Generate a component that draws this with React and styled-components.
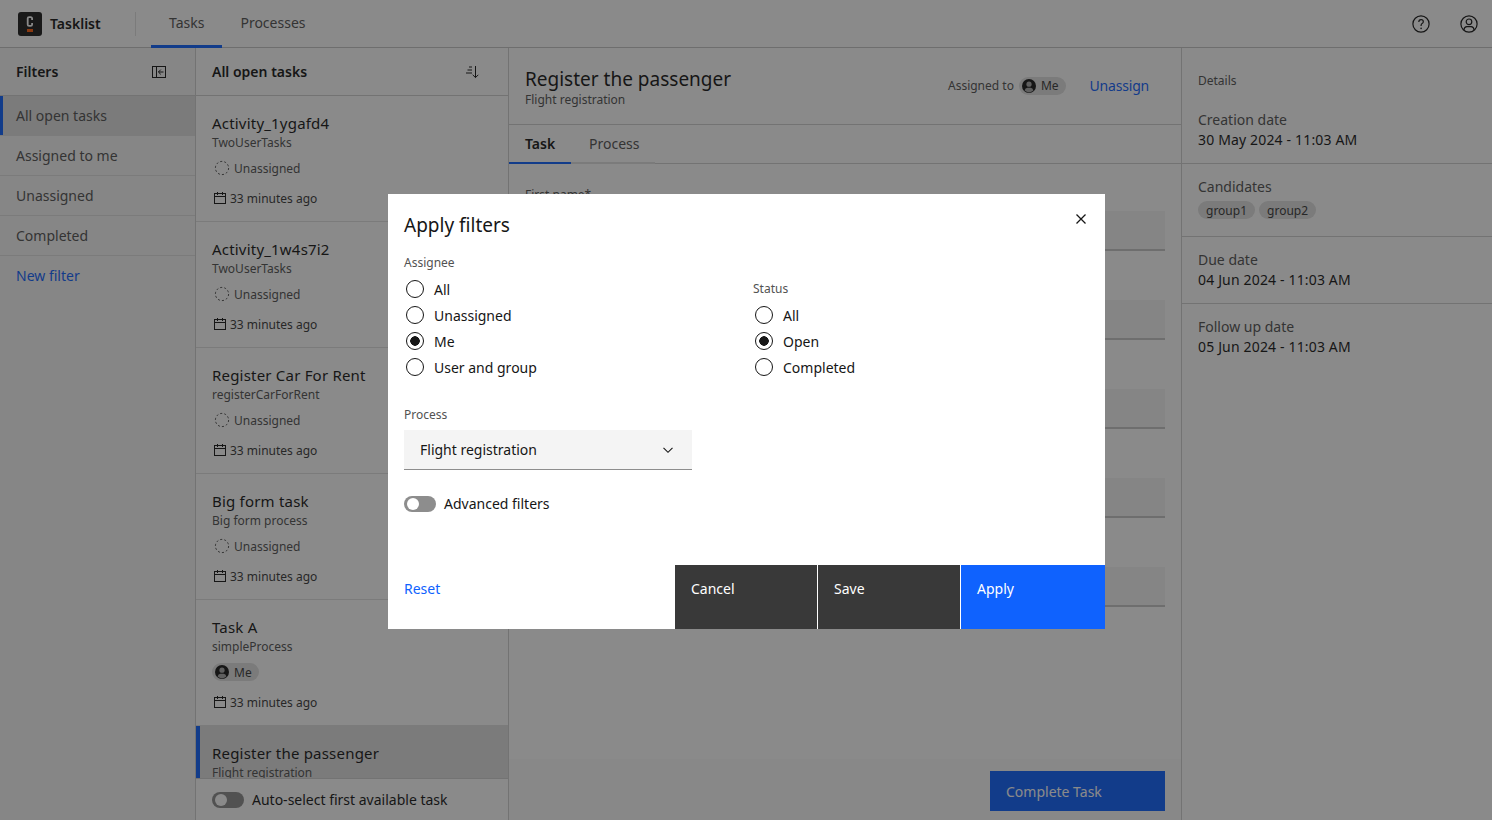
import styled, { createGlobalStyle } from "styled-components";

const GlobalStyle = createGlobalStyle`
	* {
		box-sizing: border-box;
	}
	html,
	body {
		margin: 0;
		height: 100%;
		background: #fff;
		color: #161616;
		font-family: "Noto Sans", "Liberation Sans", sans-serif;
		font-size: 14px;
	}
`;

const FILTERS = ["All open tasks", "Assigned to me", "Unassigned", "Completed"];

const TASKS = [
	{ name: "Activity_1ygafd4", process: "TwoUserTasks" },
	{ name: "Activity_1w4s7i2", process: "TwoUserTasks" },
	{ name: "Register Car For Rent", process: "registerCarForRent" },
	{ name: "Big form task", process: "Big form process" },
	{ name: "Task A", process: "simpleProcess", me: true },
	{ name: "Register the passenger", process: "Flight registration", active: true },
];

const DETAILS = [
	{ label: "Creation date", value: "30 May 2024 - 11:03 AM" },
	{ label: "Candidates", tags: ["group1", "group2"] },
	{ label: "Due date", value: "04 Jun 2024 - 11:03 AM" },
	{ label: "Follow up date", value: "05 Jun 2024 - 11:03 AM" },
];

// only the first label shows, the others sit behind the modal
const FIELDS = ["First name*", "", "", "", ""];

const ASSIGNEE = [
	{ label: "All" },
	{ label: "Unassigned" },
	{ label: "Me", checked: true },
	{ label: "User and group" },
];

const STATUS = [{ label: "All" }, { label: "Open", checked: true }, { label: "Completed" }];

const Logo = () => (
	<svg width="24" height="24" viewBox="0 0 24 24">
		<rect width="24" height="24" rx="3" fill="#1c1c1c" />
		<path d="M14.1 8V6.6q0-1.4-1.4-1.4h-1.6q-1.4 0-1.4 1.4v5.8q0 1.4 1.4 1.4h1.6q1.4 0 1.4-1.4V11" fill="none" stroke="#fff" strokeWidth="1.8" />
		<rect x="9" y="17" width="6" height="3" fill="#fc5d0d" />
	</svg>
);

const HelpIcon = () => (
	<svg width="20" height="20" viewBox="0 0 20 20" fill="none" stroke="#161616" strokeWidth="1.2">
		<circle cx="10" cy="10" r="8.1" />
		<path d="M7.8 8q0-2.3 2.3-2.3 2.2 0 2.2 2 0 1.2-1.2 1.8-1 .5-1 1.8v.6" />
		<circle cx="10.1" cy="14.4" r=".8" fill="#161616" stroke="none" />
	</svg>
);

const UserIcon = () => (
	<svg width="20" height="20" viewBox="0 0 20 20" fill="none" stroke="#161616" strokeWidth="1.2">
		<circle cx="10" cy="10" r="8.1" />
		<circle cx="10" cy="7.8" r="2.8" />
		<path d="M4.9 16q.4-3.4 3-3.4h4.2q2.6 0 3 3.4" />
	</svg>
);

const PanelIcon = () => (
	<svg width="16" height="16" viewBox="0 0 16 16" fill="none" stroke="#161616" strokeWidth="1">
		<rect x="1.5" y="2.5" width="13" height="11" />
		<path d="M5.5 2.5v11M12.5 8H7.5M9.8 5.6 7.4 8l2.4 2.4" />
	</svg>
);

const SortIcon = () => (
	<svg width="16" height="16" viewBox="0 0 16 16" fill="none" stroke="#161616" strokeWidth="1">
		<path d="M11.5 2v11.5M8.7 10.8l2.8 2.8 2.8-2.8M5 3h3M3.5 6H8M2 9h6" />
	</svg>
);

const DashedCircle = () => (
	<svg width="16" height="16" viewBox="0 0 16 16" fill="none" stroke="#525252" strokeWidth="1">
		<circle cx="8" cy="8" r="6.6" strokeDasharray="2.1 2.05" />
	</svg>
);

const CalendarIcon = () => (
	<svg width="14" height="14" viewBox="0 0 14 14" fill="none" stroke="#161616" strokeWidth="1">
		<rect x="1.5" y="2.5" width="11" height="10" />
		<path d="M1.5 5.5h11M4.5 1v3M9.5 1v3" />
	</svg>
);

const AvatarIcon = () => (
	<svg width="16" height="16" viewBox="0 0 16 16">
		<circle cx="8" cy="8" r="7" fill="#161616" />
		<circle cx="8" cy="6.2" r="2.6" fill="#a8a8a8" />
		<path d="M3.6 12.6q.6-2.9 2.8-2.9h3.2q2.2 0 2.8 2.9Q10.5 14.4 8 14.4t-4.4-1.8z" fill="#a8a8a8" />
	</svg>
);

const CloseIcon = () => (
	<svg width="20" height="20" viewBox="0 0 20 20" fill="none" stroke="#161616" strokeWidth="1.3">
		<path d="M5.5 5.5l9 9M14.5 5.5l-9 9" />
	</svg>
);

const ChevronIcon = () => (
	<svg width="16" height="16" viewBox="0 0 16 16" fill="none" stroke="#161616" strokeWidth="1.1">
		<path d="M3.5 5.8 8 10.3l4.5-4.5" />
	</svg>
);

const MeChip = () => (
	<Chip>
		<AvatarIcon />
		Me
	</Chip>
);

const RadioGroup = ({ title, items, $offset }) => (
	<RadioBlock $offset={$offset}>
		<GroupLabel>{title}</GroupLabel>
		{items.map((item) => (
			<RadioRow key={item.label}>
				<RadioDot $checked={item.checked} />
				{item.label}
			</RadioRow>
		))}
	</RadioBlock>
);

const App = () => {
	return (
		<Page>
			<GlobalStyle />
			<Header>
				<Brand>
					<Logo />
					Tasklist
				</Brand>
				<Divider />
				<Nav>
					<NavTab $active>Tasks</NavTab>
					<NavTab>Processes</NavTab>
				</Nav>
				<HeaderIcons>
					<HelpIcon />
					<UserIcon />
				</HeaderIcons>
			</Header>
			<Body>
				<FiltersColumn>
					<ColumnHead>
						Filters
						<PanelIcon />
					</ColumnHead>
					{FILTERS.map((name, i) => (
						<FilterItem key={name} $active={i === 0}>
							{name}
						</FilterItem>
					))}
					<NewFilter>New filter</NewFilter>
				</FiltersColumn>
				<TasksColumn>
					<ColumnHead>
						All open tasks
						<SortIcon />
					</ColumnHead>
					<TaskList>
						{TASKS.map((task) => (
							<TaskCard key={task.name} $active={task.active}>
								<TaskName>{task.name}</TaskName>
								<TaskProcess>{task.process}</TaskProcess>
								{!task.active && (
									<>
										<AssigneeRow>
											{task.me ? (
												<MeChip />
											) : (
												<>
													<DashedCircle />
													Unassigned
												</>
											)}
										</AssigneeRow>
										<DateRow>
											<CalendarIcon />
											33 minutes ago
										</DateRow>
									</>
								)}
							</TaskCard>
						))}
					</TaskList>
					<AutoSelect>
						<Toggle />
						Auto-select first available task
					</AutoSelect>
				</TasksColumn>
				<DetailColumn>
					<DetailHead>
						<div>
							<DetailTitle>Register the passenger</DetailTitle>
							<DetailSub>Flight registration</DetailSub>
						</div>
						<AssignedTo>
							Assigned to
							<MeChip />
						</AssignedTo>
						<Unassign>Unassign</Unassign>
					</DetailHead>
					<Tabs>
						<Tab $active>Task</Tab>
						<Tab>Process</Tab>
					</Tabs>
					<Form>
						{FIELDS.map((label, i) => (
							<Field key={i}>
								<GroupLabel>{label}</GroupLabel>
								<FieldInput />
							</Field>
						))}
					</Form>
					<DetailFooter>
						<CompleteButton>Complete Task</CompleteButton>
					</DetailFooter>
				</DetailColumn>
				<SideColumn>
					<SideTitle>Details</SideTitle>
					{DETAILS.map((item) => (
						<SideSection key={item.label}>
							<SideLabel>{item.label}</SideLabel>
							{item.value && <SideValue>{item.value}</SideValue>}
							{item.tags && (
								<TagRow>
									{item.tags.map((tag) => (
										<Tag key={tag}>{tag}</Tag>
									))}
								</TagRow>
							)}
						</SideSection>
					))}
				</SideColumn>
			</Body>
			<Scrim>
				<Modal>
					<ModalHead>
						Apply filters
						<CloseButton>
							<CloseIcon />
						</CloseButton>
					</ModalHead>
					<ModalBody>
						<RadioColumns>
							<RadioGroup title="Assignee" items={ASSIGNEE} />
							<RadioGroup title="Status" items={STATUS} $offset />
						</RadioColumns>
						<ProcessLabel>Process</ProcessLabel>
						<Select>
							Flight registration
							<ChevronIcon />
						</Select>
						<AdvancedRow>
							<Toggle />
							Advanced filters
						</AdvancedRow>
					</ModalBody>
					<ModalFooter>
						<ResetLink>Reset</ResetLink>
						<FooterButton>Cancel</FooterButton>
						<FooterButton>Save</FooterButton>
						<FooterButton $primary>Apply</FooterButton>
					</ModalFooter>
				</Modal>
			</Scrim>
		</Page>
	);
};

export default App;

const Page = styled.div`
	display: flex;
	flex-direction: column;
	height: 100vh;
	overflow: hidden;
`;

const Header = styled.header`
	display: flex;
	align-items: center;
	flex: none;
	height: 48px;
	padding: 0 13px 0 18px;
	border-bottom: 1px solid #c6c6c6;
`;

const Brand = styled.div`
	display: flex;
	align-items: center;
	gap: 8px;
	width: 117px;
	font-weight: 600;
`;

const Divider = styled.div`
	width: 1px;
	height: 24px;
	background: #e0e0e0;
`;

const Nav = styled.nav`
	display: flex;
	align-self: stretch;
	margin-left: 15px;
`;

const NavTab = styled.div`
	display: flex;
	align-items: center;
	padding: 0 18px;
	margin-bottom: -1px;
	color: #525252;
	border-bottom: 3px solid ${(p) => (p.$active ? "#0f62fe" : "transparent")};
`;

const HeaderIcons = styled.div`
	display: flex;
	gap: 28px;
	margin-left: auto;
`;

const Body = styled.div`
	display: flex;
	flex: 1;
	min-height: 0;
`;

const FiltersColumn = styled.aside`
	flex: none;
	width: 196px;
	background: #f7f7f7;
	border-right: 1px solid #d0d0d0;
`;

const ColumnHead = styled.div`
	display: flex;
	align-items: center;
	justify-content: space-between;
	flex: none;
	height: 48px;
	padding: 0 28px 0 16px;
	border-bottom: 1px solid #d0d0d0;
	font-weight: 600;
`;

const FilterItem = styled.div`
	display: flex;
	align-items: center;
	height: 40px;
	padding-left: 16px;
	color: #525252;
	background: ${(p) => (p.$active ? "#e0e0e0" : "transparent")};
	border-bottom: 1px solid #e0e0e0;
	box-shadow: ${(p) => (p.$active ? "inset 3px 0 0 #0f62fe" : "none")};
`;

const NewFilter = styled.div`
	padding: 10px 16px;
	color: #0f62fe;
`;

const TasksColumn = styled.section`
	display: flex;
	flex-direction: column;
	flex: none;
	width: 313px;
	min-height: 0;
	border-right: 1px solid #d0d0d0;
`;

const TaskList = styled.div`
	flex: 1;
	min-height: 0;
	overflow: hidden;
`;

const TaskCard = styled.div`
	height: 126px;
	padding: 15px 16px 0;
	background: ${(p) => (p.$active ? "#e0e0e0" : "transparent")};
	border-bottom: 1px solid #e0e0e0;
	box-shadow: ${(p) => (p.$active ? "inset 4px 0 0 #0f62fe" : "none")};
`;

const TaskName = styled.div`
	font-size: 15px;
	line-height: 24px;
	letter-spacing: 0.2px;
`;

const TaskProcess = styled.div`
	font-size: 12px;
	line-height: 16px;
	color: #525252;
`;

const AssigneeRow = styled.div`
	display: flex;
	align-items: center;
	gap: 4px;
	height: 20px;
	margin-top: 7px;
	padding-left: 2px;
	font-size: 12px;
	color: #525252;
`;

const DateRow = styled.div`
	display: flex;
	align-items: center;
	gap: 3px;
	height: 20px;
	margin-top: 10px;
	padding-left: 1px;
	font-size: 12px;
	color: #393939;
`;

const Chip = styled.span`
	display: inline-flex;
	align-items: center;
	gap: 4px;
	height: 18px;
	padding: 0 7px 0 2px;
	margin-left: -2px;
	border-radius: 9px;
	background: #e0e0e0;
	font-size: 12px;
	color: #393939;
`;

const AutoSelect = styled.div`
	display: flex;
	align-items: center;
	gap: 8px;
	flex: none;
	height: 42px;
	padding-left: 16px;
	background: #fff;
	border-top: 1px solid #d0d0d0;
	color: #161616;
`;

const Toggle = styled.span`
	position: relative;
	flex: none;
	width: 32px;
	height: 16px;
	border-radius: 8px;
	background: #8d8d8d;

	&::after {
		content: "";
		position: absolute;
		top: 2px;
		left: 3px;
		width: 12px;
		height: 12px;
		border-radius: 50%;
		background: #fff;
	}
`;

const DetailColumn = styled.main`
	display: flex;
	flex-direction: column;
	flex: none;
	width: 673px;
	min-height: 0;
	border-right: 1px solid #d0d0d0;
`;

const DetailHead = styled.div`
	display: flex;
	align-items: center;
	flex: none;
	height: 77px;
	padding: 2px 32px 0 16px;
	border-bottom: 1px solid #d0d0d0;
`;

const DetailTitle = styled.div`
	font-size: 19px;
	line-height: 26px;
`;

const DetailSub = styled.div`
	font-size: 12px;
	line-height: 16px;
	color: #525252;
`;

const AssignedTo = styled.div`
	display: flex;
	align-items: center;
	gap: 7px;
	margin: 0 0 3px auto;
	font-size: 12px;
	color: #525252;
`;

const Unassign = styled.div`
	margin: 0 0 3px 24px;
	color: #0f62fe;
	letter-spacing: -0.2px;
`;

const Tabs = styled.div`
	display: flex;
	flex: none;
	height: 39px;
	border-bottom: 1px solid #d0d0d0;
`;

const Tab = styled.div`
	display: flex;
	align-items: center;
	width: ${(p) => (p.$active ? "62px" : "84px")};
	padding-left: ${(p) => (p.$active ? "16px" : "18px")};
	margin-bottom: -1px;
	font-weight: ${(p) => (p.$active ? 600 : 400)};
	color: ${(p) => (p.$active ? "#161616" : "#525252")};
	border-bottom: 2px solid ${(p) => (p.$active ? "#0f62fe" : "#e0e0e0")};
`;

const Form = styled.div`
	flex: 1;
	min-height: 0;
	overflow: hidden;
	padding: 23px 16px 0;
`;

const Field = styled.div`
	margin-bottom: 25px;
`;

const GroupLabel = styled.div`
	min-height: 16px;
	font-size: 12px;
	line-height: 16px;
	color: #525252;
`;

const FieldInput = styled.div`
	height: 40px;
	margin-top: 8px;
	background: #f4f4f4;
	border-bottom: 2px solid #c6c6c6;
`;

const DetailFooter = styled.div`
	display: flex;
	justify-content: flex-end;
	flex: none;
	height: 61px;
	padding: 12px 16px 0;
	background: #fafafa;
`;

const CompleteButton = styled.div`
	display: flex;
	align-items: center;
	width: 175px;
	height: 40px;
	padding-left: 16px;
	background: #0f62fe;
	color: #fff;
`;

const SideColumn = styled.aside`
	flex: 1;
`;

const SideTitle = styled.div`
	padding: 25px 16px 8px;
	font-size: 12px;
	line-height: 16px;
	color: #525252;
`;

const SideSection = styled.div`
	padding: 13px 16px;
	border-bottom: 1px solid #d0d0d0;

	&:last-child {
		border-bottom: 0;
	}
`;

const SideLabel = styled.div`
	line-height: 20px;
	color: #525252;
`;

const SideValue = styled.div`
	line-height: 20px;
	color: #161616;
	letter-spacing: 0.16px;
`;

const TagRow = styled.div`
	display: flex;
	gap: 4px;
	margin: 4px 0;
`;

const Tag = styled.span`
	display: inline-flex;
	align-items: center;
	height: 18px;
	padding: 0 8px;
	border-radius: 9px;
	background: #e0e0e0;
	font-size: 12px;
	color: #393939;
`;

const Scrim = styled.div`
	position: fixed;
	inset: 0;
	display: flex;
	align-items: flex-start;
	padding: 194px 0 0 388px;
	background: rgba(22, 22, 22, 0.5);
`;

const Modal = styled.div`
	display: flex;
	flex-direction: column;
	width: 717px;
	height: 435px;
	background: #fff;
`;

const ModalHead = styled.div`
	display: flex;
	align-items: flex-start;
	justify-content: space-between;
	padding: 17px 14px 0 16px;
	font-size: 19px;
	line-height: 28px;
`;

const CloseButton = styled.div`
	display: flex;
	margin-top: -2px;
`;

const ModalBody = styled.div`
	flex: 1;
	padding: 16px 16px 0;
`;

const RadioColumns = styled.div`
	display: grid;
	grid-template-columns: 349px 1fr;
`;

const RadioBlock = styled.div`
	margin-top: ${(p) => (p.$offset ? "26px" : "0")};
`;

const RadioRow = styled.div`
	display: flex;
	align-items: center;
	gap: 10px;
	height: 26px;
	padding-left: 2px;
	color: #161616;

	${GroupLabel} + & {
		margin-top: 5px;
	}
`;

const RadioDot = styled.span`
	flex: none;
	width: 18px;
	height: 18px;
	border-radius: 50%;
	border: 1px solid #161616;
	background: ${(p) => (p.$checked ? "radial-gradient(circle, #161616 0 4.5px, transparent 5px)" : "none")};
`;

const ProcessLabel = styled(GroupLabel)`
	margin-top: 27px;
`;

const Select = styled.div`
	display: flex;
	align-items: center;
	justify-content: space-between;
	width: 288px;
	height: 40px;
	margin-top: 7px;
	padding: 0 16px;
	background: #f4f4f4;
	border-bottom: 1px solid #8d8d8d;
`;

const AdvancedRow = styled.div`
	display: flex;
	align-items: center;
	gap: 8px;
	margin-top: 24px;
`;

const ModalFooter = styled.div`
	display: flex;
	flex: none;
	height: 64px;
`;

const ResetLink = styled.div`
	flex: 1;
	padding: 14px 16px;
	color: #0f62fe;
`;

const FooterButton = styled.div`
	width: ${(p) => (p.$primary ? "145px" : "143px")};
	padding: 14px 16px;
	border-left: 1px solid #fff;
	background: ${(p) => (p.$primary ? "#0f62fe" : "#393939")};
	color: #fff;
`;
